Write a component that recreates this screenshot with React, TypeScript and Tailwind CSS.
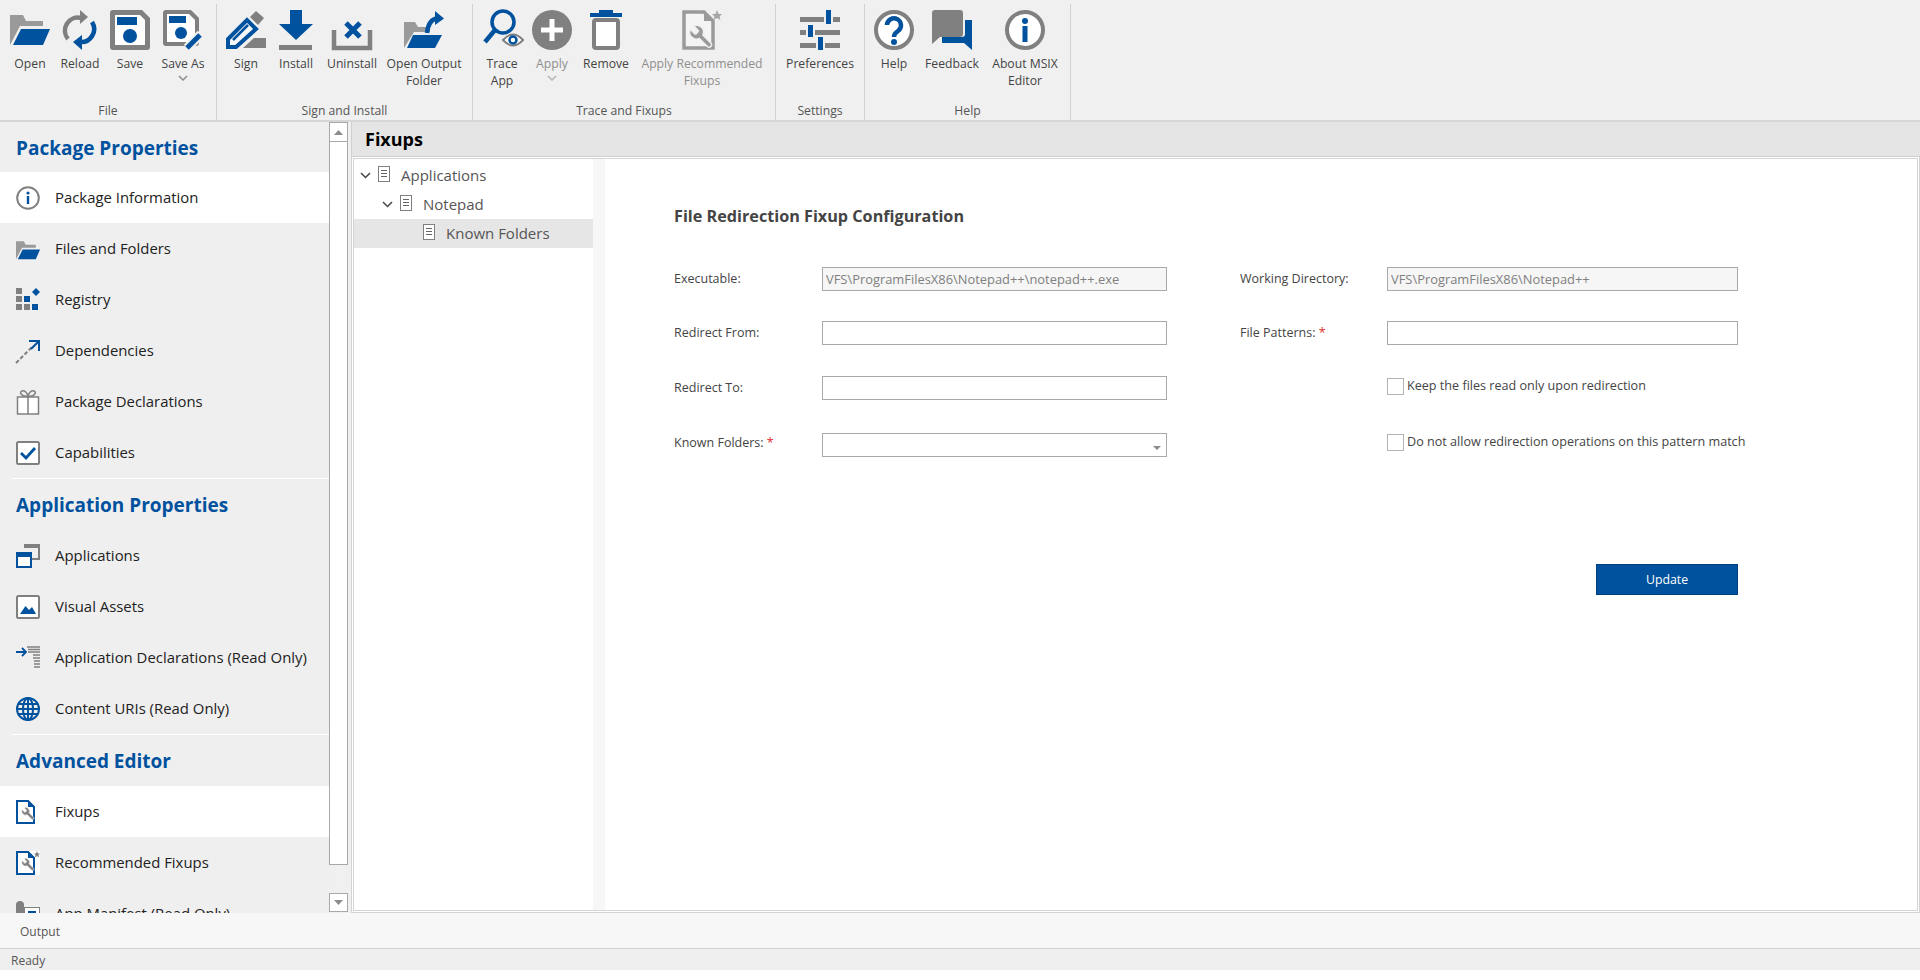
const BLUE = "#00529f";
const GRAY = "#808080";
const WRENCH = "M14.7 6.3a1 1 0 0 0 0 1.4l1.6 1.6a1 1 0 0 0 1.4 0l3.77-3.77a6 6 0 0 1-7.94 7.94l-6.91 6.91a2.12 2.12 0 0 1-3-3l6.91-6.91a6 6 0 0 1 7.94-7.94l-3.76 3.76z";

function I({ children, size = 40, box = 40, className = "" }: { children: React.ReactNode; size?: number; box?: number; className?: string }) {
  return (
    <svg width={size} height={size} viewBox={`0 0 ${box} ${box}`} className={`shrink-0 overflow-visible ${className}`}>
      {children}
    </svg>
  );
}

const Folder = () => (
  <>
    <polygon points="0,35 0,5 13,5 16,11 33,11 33,16 10,16" fill="#9a9a9a" />
    <polygon points="11,19 40,19 33,35 3,35" fill={BLUE} />
  </>
);
const Reload = () => (
  <>
    <path d="M8 29 A13 13 0 0 1 21 8" fill="none" stroke={GRAY} strokeWidth="4.5" />
    <polygon points="20,0 28,7 20,14" fill={GRAY} />
    <path d="M32 12 A13 13 0 0 1 20 32" fill="none" stroke={BLUE} strokeWidth="4.5" />
    <polygon points="22,25 13,32 22,40" fill={BLUE} />
  </>
);
const Save = () => (
  <>
    <path d="M3 0H32L40 8V37a3 3 0 0 1-3 3H3a3 3 0 0 1-3-3V3a3 3 0 0 1 3-3z" fill={GRAY} />
    <path d="M5 5H30L35 10V35H5z" fill="#fff" />
    <rect x="7" y="7" width="20" height="8" fill={BLUE} />
    <circle cx="20" cy="26" r="7" fill={BLUE} />
  </>
);
const SaveAs = () => (
  <>
    <path d="M3 0H28L36 8V33a3 3 0 0 1-3 3H3a3 3 0 0 1-3-3V3a3 3 0 0 1 3-3z" fill={GRAY} />
    <path d="M4 4H26L32 10V32H4z" fill="#fff" />
    <rect x="6" y="6" width="17" height="7" fill={BLUE} />
    <circle cx="18" cy="23" r="6" fill={BLUE} />
    <path d="M24 38L38 24" stroke="#f0f0f0" strokeWidth="9" />
    <path d="M24 38L37 25" stroke={BLUE} strokeWidth="5" />
  </>
);
const Sign = () => (
  <>
    <polygon points="28,28 40,28 40,38 17,38" fill={GRAY} />
    <path d="M2 37V29L21 10L30 19L10 37z" fill="#f6f6f6" stroke={BLUE} strokeWidth="4" />
    <path d="M7 30L22 15" stroke={BLUE} strokeWidth="2.5" />
    <polygon points="24,7 30,1 38,8 32,15" fill={GRAY} />
  </>
);
const Install = () => (
  <>
    <polygon points="14,0 26,0 26,14 37,14 20,30 3,14 14,14" fill={BLUE} />
    <rect x="3" y="35" width="33" height="5" fill={GRAY} />
  </>
);
const Uninstall = () => (
  <>
    <path d="M2 20V38H38V20" fill="none" stroke={GRAY} strokeWidth="4.5" />
    <path d="M14 15L28 29M28 15L14 29" transform="translate(0 -2)" stroke={BLUE} strokeWidth="5" />
  </>
);
const OpenOutput = () => (
  <>
    <polygon points="0,38 0,12 11,12 14,17 26,17 26,22 10,22" fill="#9a9a9a" />
    <polygon points="9,25 38,25 31,38 3,38" fill={BLUE} />
    <path d="M23 23C24 14 28 9 33 8.5" fill="none" stroke={BLUE} strokeWidth="4.5" />
    <polygon points="31,1 40,8.5 31,15" fill={BLUE} />
  </>
);
const Trace = () => (
  <>
    <circle cx="21" cy="12" r="11" fill="none" stroke={BLUE} strokeWidth="3.5" />
    <path d="M13 20L3 32" stroke={BLUE} strokeWidth="4.5" />
    <path d="M21 30Q31 19 41 30Q31 41 21 30z" fill="#fff" stroke={GRAY} strokeWidth="2" />
    <circle cx="31" cy="30" r="3.5" fill="none" stroke={BLUE} strokeWidth="2.5" />
  </>
);
const Apply = () => (
  <>
    <circle cx="20" cy="20" r="20" fill={GRAY} />
    <path d="M20 9V31M9 20H31" stroke="#fff" strokeWidth="5" />
  </>
);
const Remove = () => (
  <>
    <rect x="13" y="0" width="14" height="3" fill={BLUE} />
    <rect x="4" y="3" width="32" height="4" fill={BLUE} />
    <rect x="8" y="10" width="24" height="28" rx="2" fill="#fff" stroke={GRAY} strokeWidth="4" />
  </>
);
const ApplyRec = () => (
  <>
    <path d="M2 2H22L31 11V38H2z" fill="#f4f4f4" stroke="#9a9a9a" strokeWidth="3.5" />
    <path d="M22 2V11H31z" fill="#9a9a9a" />
    <path d={WRENCH} transform="translate(33 13) scale(-1.15 1.15)" fill="#9a9a9a" stroke="#f0f0f0" strokeWidth="1.2" />
    <polygon points="35,0 36.5,4 40,4 37.5,6.500 38.500,10 35,8 31.500,10 32.500,6.500 30,4 33.500,4" fill="#a6a6a6" />
  </>
);
const Prefs = () => (
  <>
    <rect x="0" y="7" width="40" height="5" fill={GRAY} />
    <rect x="0" y="20" width="40" height="5" fill={GRAY} />
    <rect x="0" y="33" width="40" height="5" fill={GRAY} />
    <rect x="24" y="0" width="9" height="14" fill="#f0f0f0" />
    <rect x="26" y="0" width="5" height="14" fill={BLUE} />
    <rect x="6" y="15" width="9" height="12" fill="#f0f0f0" />
    <rect x="8" y="15" width="5" height="12" fill={BLUE} />
    <rect x="16" y="27" width="9" height="13" fill="#f0f0f0" />
    <rect x="18" y="27" width="5" height="13" fill={BLUE} />
  </>
);
const Help = () => (
  <>
    <circle cx="20" cy="20" r="18" fill="#fff" stroke={GRAY} strokeWidth="4" />
    <path d="M13 15a7 7 0 1 1 11 6c-3 2-4 3-4 6" fill="none" stroke={BLUE} strokeWidth="4.5" />
    <circle cx="20" cy="32" r="3" fill={BLUE} />
  </>
);
const Feedback = () => (
  <>
    <path d="M3 0H28a3 3 0 0 1 3 3V24a3 3 0 0 1-3 3H8L0 34V3a3 3 0 0 1 3-3z" fill={GRAY} />
    <path d="M33 10H40V40L32 33H10V27H30a3 3 0 0 0 3-3z" fill={BLUE} />
  </>
);
const About = () => (
  <>
    <circle cx="20" cy="20" r="18" fill="#fff" stroke={GRAY} strokeWidth="4" />
    <circle cx="20" cy="11" r="3" fill={BLUE} />
    <rect x="17.500" y="16" width="5" height="16" fill={BLUE} />
  </>
);

const Info = () => (
  <>
    <circle cx="12" cy="12" r="10.800" fill="#fff" stroke={GRAY} strokeWidth="2" />
    <circle cx="12" cy="7" r="1.600" fill={BLUE} />
    <rect x="10.800" y="10" width="2.400" height="8" fill={BLUE} />
  </>
);
const Registry = () => (
  <>
    <path d="M0 0h6v6H0zM0 8h6v6H0zM0 16h6v6H0zM8 16h6v6H8z" fill={GRAY} />
    <path d="M8 8h6v6H8zM16 16h6v6h-6zM20 0l4 4-4 4-4-4z" fill={BLUE} />
  </>
);
const Dependencies = () => (
  <>
    <path d="M0 24L17 7" stroke={GRAY} strokeWidth="2" strokeDasharray="4 2" />
    <path d="M13 2H23V12M23 2L15 10" fill="none" stroke={BLUE} strokeWidth="2" />
  </>
);
const Gift = () => (
  <>
    <rect x="1.500" y="7" width="21" height="17" fill="#fff" stroke={GRAY} strokeWidth="1.500" />
    <path d="M12 7V24" stroke={GRAY} strokeWidth="1.500" />
    <path d="M12 6C5 7 3 2 6 1s5 2 6 5c1-3 3-6 6-5s1 6-6 5z" fill="none" stroke={GRAY} strokeWidth="1.500" />
  </>
);
const Capabilities = () => (
  <>
    <rect x="1" y="1" width="22" height="22" rx="1.500" fill="#fff" stroke={GRAY} strokeWidth="2" />
    <path d="M5 12L10 17L19 7" fill="none" stroke={BLUE} strokeWidth="2.800" />
  </>
);
const Applications = () => (
  <>
    <path d="M8 1H23V15H15" fill="none" stroke={GRAY} strokeWidth="2" />
    <rect x="8" y="0" width="16" height="4" fill={GRAY} />
    <rect x="1" y="9" width="14" height="14" fill="#fff" stroke={BLUE} strokeWidth="2" />
    <rect x="0" y="8" width="16" height="5" fill={BLUE} />
  </>
);
const Assets = () => (
  <>
    <rect x="1" y="1" width="22" height="22" rx="1.500" fill="#fff" stroke={GRAY} strokeWidth="2" />
    <path d="M4 19L9.500 11L13 15L16 12L20 19z" fill={BLUE} />
  </>
);
const Declarations = () => (
  <>
    <path d="M0 6H9M6 2L10 6L6 10" fill="none" stroke={BLUE} strokeWidth="1.800" />
    <path d="M11 1H24M12 3.500H24M12 6H24M17 9H24M17 12H24M18 15H24M18 18H24M18 21H24" stroke={GRAY} strokeWidth="1.300" />
  </>
);
const Globe = () => (
  <>
    <circle cx="12" cy="12" r="11" fill="none" stroke={BLUE} strokeWidth="2" />
    <ellipse cx="12" cy="12" rx="5" ry="11" fill="none" stroke={BLUE} strokeWidth="2" />
    <path d="M12 1V23M1 12H23M2.500 7H21.500M2.500 17H21.500" stroke={BLUE} strokeWidth="2" />
  </>
);
const Fixups = () => (
  <>
    <path d="M1 1H12L18 7V23H1z" fill="#fff" stroke={BLUE} strokeWidth="2" />
    <path d="M12 0V7H19z" fill={BLUE} />
    <path d={WRENCH} transform="translate(20 6) scale(-0.65 0.65)" fill={GRAY} stroke="#fff" strokeWidth="0.8" />
  </>
);
const RecFixups = () => (
  <>
    <rect x="14" y="0" width="10" height="24" fill="#fff" />
    <path d="M1 1H12L18 7V23H1z" fill="#fff" stroke={BLUE} strokeWidth="2" />
    <path d="M12 0V7H19z" fill={BLUE} />
    <path d={WRENCH} transform="translate(20 6) scale(-0.65 0.65)" fill={GRAY} stroke="#fff" strokeWidth="0.8" />
    <polygon points="21,0 22,2.500 24,2.500 22.500,4 23,6.500 21,5 19,6.500 19.500,4 18,2.500 20,2.500" fill={GRAY} />
  </>
);
const Manifest = () => (
  <>
    <path d="M0 3a3.500 3.500 0 0 1 8 0V24H0z" fill={GRAY} />
    <rect x="8.500" y="5.500" width="15" height="17" fill="#fff" stroke={GRAY} />
    <path d="M12 10H20" stroke={BLUE} strokeWidth="2" />
  </>
);

const Chevron = ({ className = "", color = "#8c8c8c" }: { className?: string; color?: string }) => (
  <svg width="10" height="6" viewBox="0 0 10 6" className={className}>
    <path d="M1 1L5 5L9 1" fill="none" stroke={color} strokeWidth="1.500" />
  </svg>
);

type Btn = { w: string; icon: React.ReactNode; label: string; off?: boolean; caret?: boolean };
type Group = { name: string; w: string; pad: string; btns: Btn[] };

const groups: Group[] = [
  {
    name: "File",
    w: "w-[217px]",
    pad: "pl-[5px]",
    btns: [
      { w: "w-[50px]", icon: <Folder />, label: "Open" },
      { w: "w-[50px]", icon: <Reload />, label: "Reload" },
      { w: "w-[50px]", icon: <Save />, label: "Save" },
      { w: "w-[56px]", icon: <SaveAs />, label: "Save As", caret: true },
    ],
  },
  {
    name: "Sign and Install",
    w: "w-[256px]",
    pad: "pl-[4px]",
    btns: [
      { w: "w-[50px]", icon: <Sign />, label: "Sign" },
      { w: "w-[50px]", icon: <Install />, label: "Install" },
      { w: "w-[62px]", icon: <Uninstall />, label: "Uninstall" },
      { w: "w-[82px]", icon: <OpenOutput />, label: "Open Output Folder" },
    ],
  },
  {
    name: "Trace and Fixups",
    w: "w-[303px]",
    pad: "pl-[4px]",
    btns: [
      { w: "w-[50px]", icon: <Trace />, label: "Trace App" },
      { w: "w-[50px]", icon: <Apply />, label: "Apply", off: true, caret: true },
      { w: "w-[58px]", icon: <Remove />, label: "Remove" },
      { w: "w-[134px]", icon: <ApplyRec />, label: "Apply Recommended Fixups", off: true },
    ],
  },
  {
    name: "Settings",
    w: "w-[89px]",
    pad: "pl-[4px]",
    btns: [{ w: "w-[80px]", icon: <Prefs />, label: "Preferences" }],
  },
  {
    name: "Help",
    w: "w-[206px]",
    pad: "pl-[4px]",
    btns: [
      { w: "w-[50px]", icon: <Help />, label: "Help" },
      { w: "w-[66px]", icon: <Feedback />, label: "Feedback" },
      { w: "w-[80px]", icon: <About />, label: "About MSIX Editor" },
    ],
  },
];

function Ribbon() {
  return (
    <div className="h-[122px] shrink-0 flex bg-[#f0f0f0] border-b-2 border-[#d6d6d6] text-[12.2px] leading-[17px] text-[#444]">
      {groups.map((g) => (
        <div key={g.name} className={`${g.w} h-[116px] mt-[4px] flex flex-col border-r border-[#d0d0d0]`}>
          <div className={`flex ${g.pad} pt-[6px] h-[96px]`}>
            {g.btns.map((b) => (
              <div key={b.label} className={`${b.w} flex flex-col items-center text-center`}>
                <I>{b.icon}</I>
                <span className={`mt-[5px] ${b.off ? "text-[#8f8f8f]" : ""}`}>{b.label}</span>
                {b.caret && <Chevron className="mt-[3px]" color={b.off ? "#b4b4b4" : "#8c8c8c"} />}
              </div>
            ))}
          </div>
          <div className="text-center leading-[16px] text-[#555] mt-[3px]">{g.name}</div>
        </div>
      ))}
    </div>
  );
}

function NavItem({ icon, label, active }: { icon: React.ReactNode; label: string; active?: boolean }) {
  return (
    <div className={`h-[51px] shrink-0 flex items-center pl-[16px] gap-[15px] text-[14.9px] text-[#222] ${active ? "bg-white" : ""}`}>
      <I size={24} box={24}>{icon}</I>
      <span className="whitespace-nowrap">{label}</span>
    </div>
  );
}

function NavHeading({ children, h }: { children: React.ReactNode; h: string }) {
  return <div className={`${h} shrink-0 flex items-center pl-[16px] text-[19px] font-bold text-[#00529f]`}>{children}</div>;
}

function Sidebar() {
  return (
    <div className="w-[329px] shrink-0 h-full overflow-hidden flex flex-col bg-[#efefef]">
      <NavHeading h="h-[50px] pt-[2px]">Package Properties</NavHeading>
      <NavItem icon={<Info />} label="Package Information" active />
      <NavItem icon={<g transform="scale(0.6) translate(0 2)"><Folder /></g>} label="Files and Folders" />
      <NavItem icon={<Registry />} label="Registry" />
      <NavItem icon={<Dependencies />} label="Dependencies" />
      <NavItem icon={<Gift />} label="Package Declarations" />
      <NavItem icon={<Capabilities />} label="Capabilities" />
      <div className="h-px shrink-0 ml-[12px] bg-white" />
      <NavHeading h="h-[51px] pt-[2px]">Application Properties</NavHeading>
      <NavItem icon={<Applications />} label="Applications" />
      <NavItem icon={<Assets />} label="Visual Assets" />
      <NavItem icon={<Declarations />} label="Application Declarations (Read Only)" />
      <NavItem icon={<Globe />} label="Content URIs (Read Only)" />
      <div className="h-px shrink-0 ml-[12px] bg-white" />
      <NavHeading h="h-[51px] pt-[1px]">Advanced Editor</NavHeading>
      <NavItem icon={<Fixups />} label="Fixups" active />
      <NavItem icon={<RecFixups />} label="Recommended Fixups" />
      <NavItem icon={<Manifest />} label="App Manifest (Read Only)" />
    </div>
  );
}

function Scrollbar() {
  return (
    <div className="w-[19px] shrink-0 h-full flex flex-col">
      <div className="h-[20px] shrink-0 bg-white border border-[#a8a8a8] flex items-center justify-center">
        <svg width="9" height="5" viewBox="0 0 9 5"><polygon points="0,5 4.500,0 9,5" fill="#8c8c8c" /></svg>
      </div>
      <div className="h-[723px] shrink-0 bg-white border-x border-b border-[#a8a8a8]" />
      <div className="flex-1" />
      <div className="h-[19px] shrink-0 bg-white border border-[#a8a8a8] flex items-center justify-center">
        <svg width="9" height="5" viewBox="0 0 9 5"><polygon points="0,0 4.500,5 9,0" fill="#8c8c8c" /></svg>
      </div>
      <div className="h-px shrink-0" />
    </div>
  );
}

function TreeRow({ depth, label, open, selected }: { depth: string; label: string; open?: boolean; selected?: boolean }) {
  return (
    <div className={`h-[29px] flex items-center ${depth} ${selected ? "bg-[#e6e6e6]" : ""}`}>
      <div className="w-[14px] shrink-0 flex justify-center">
        {open && (
          <svg width="11" height="7" viewBox="0 0 11 7"><path d="M1 1L5.500 5.500L10 1" fill="none" stroke="#444" strokeWidth="1.500" /></svg>
        )}
      </div>
      <svg width="12" height="16" viewBox="0 0 12 16" className="ml-[6px] shrink-0 mb-[4px]">
        <rect x="0.500" y="0.500" width="11" height="15" fill="#fff" stroke="#808080" />
        <path d="M3 4.500H9M3 7.500H9M3 10.500H9" stroke="#666" />
      </svg>
      <span className="ml-[11px] text-[15px] text-[#555] whitespace-nowrap">{label}</span>
    </div>
  );
}

function Tree() {
  return (
    <div className="w-[239px] shrink-0 pt-[2px] bg-white">
      <TreeRow depth="pl-[4px]" label="Applications" open />
      <TreeRow depth="pl-[26px]" label="Notepad" open />
      <TreeRow depth="pl-[49px]" label="Known Folders" selected />
    </div>
  );
}

function Field({ value, disabled }: { value?: string; disabled?: boolean }) {
  return (
    <input
      readOnly
      value={value ?? ""}
      className={`w-full h-[24px] border border-[#a9a9a9] px-[3px] text-[12.9px] outline-none ${disabled ? "bg-[#f6f6f6] text-[#808080]" : "bg-white"}`}
    />
  );
}

function Req() {
  return <span className="text-[#e0302f]"> *</span>;
}

function Check({ label, className = "" }: { label: string; className?: string }) {
  return (
    <div className={`self-start flex items-center gap-[3px] whitespace-nowrap text-[12.6px] ${className}`}>
      <div className="w-[17px] h-[17px] border border-[#b4b4b4] bg-white shrink-0" />
      <span>{label}</span>
    </div>
  );
}

function Form() {
  const label = "h-[24px] flex items-center whitespace-nowrap";
  return (
    <div className="flex-1 bg-white pl-[69px] text-[12.5px] text-[#444]">
      <div className="mt-[46px] h-[22px] flex items-center text-[16.2px] font-bold text-[#444]">File Redirection Fixup Configuration</div>
      <div className="mt-[40px] w-[1064px] grid grid-cols-[148px_345px_73px_147px_351px] grid-rows-[54px_55px_57px_24px]">
        <div className={label}>Executable:</div>
        <Field value="VFS\ProgramFilesX86\Notepad++\notepad++.exe" disabled />
        <div />
        <div className={label}>Working Directory:</div>
        <Field value="VFS\ProgramFilesX86\Notepad++" disabled />

        <div className={label}>Redirect From:</div>
        <Field />
        <div />
        <div className={label}><span>File Patterns:<Req /></span></div>
        <Field />

        <div className={label}>Redirect To:</div>
        <Field />
        <div />
        <div />
        <Check label="Keep the files read only upon redirection" className="mt-px" />

        <div className={`${label} pb-[3px]`}><span>Known Folders:<Req /></span></div>
        <div className="relative h-[24px]">
          <Field />
          <svg width="8" height="4" viewBox="0 0 8 4" className="absolute right-[6px] top-[13px]"><polygon points="0,0 8,0 4,4" fill="#8c8c8c" /></svg>
        </div>
        <div />
        <div />
        <Check label="Do not allow redirection operations on this pattern match" />
      </div>
      <div className="w-[1064px] mt-[107px] flex justify-end">
        <button className="w-[142px] h-[31px] pt-[2px] bg-[#00529f] border border-[#003f7d] text-white text-[12.3px]">Update</button>
      </div>
    </div>
  );
}

export default function App() {
  return (
    <div className="w-[1920px] h-[970px] flex flex-col overflow-hidden bg-[#f0f0f0] font-['Open_Sans','Liberation_Sans',sans-serif]">
      <Ribbon />
      <div className="h-[791px] shrink-0 flex">
        <Sidebar />
        <Scrollbar />
        <div className="ml-[3px] flex-1 min-w-0 flex flex-col">
          <div className="h-[35px] shrink-0 flex items-center pl-[13px] text-[18px] font-bold text-black bg-[#e5e5e5] border-l border-b border-[#cfcfcf]">Fixups</div>
          <div className="flex-1 min-h-0 bg-white border-x border-b border-[#d4d4d4] pt-px px-px pb-px">
            <div className="h-full flex border border-[#d4d4d4]">
              <Tree />
              <div className="w-[12px] shrink-0 bg-[#f7f7f7]" />
              <Form />
            </div>
          </div>
        </div>
      </div>
      <div className="h-[36px] shrink-0 flex items-center pl-[20px] pt-[2px] bg-[#f7f7f7] border-b border-[#d0d0d0] text-[12px] text-[#555]">Output</div>
      <div className="flex-1 flex items-center pl-[11px] pt-[3px] bg-[#efefef] text-[12px] text-[#555]">Ready</div>
    </div>
  );
}
